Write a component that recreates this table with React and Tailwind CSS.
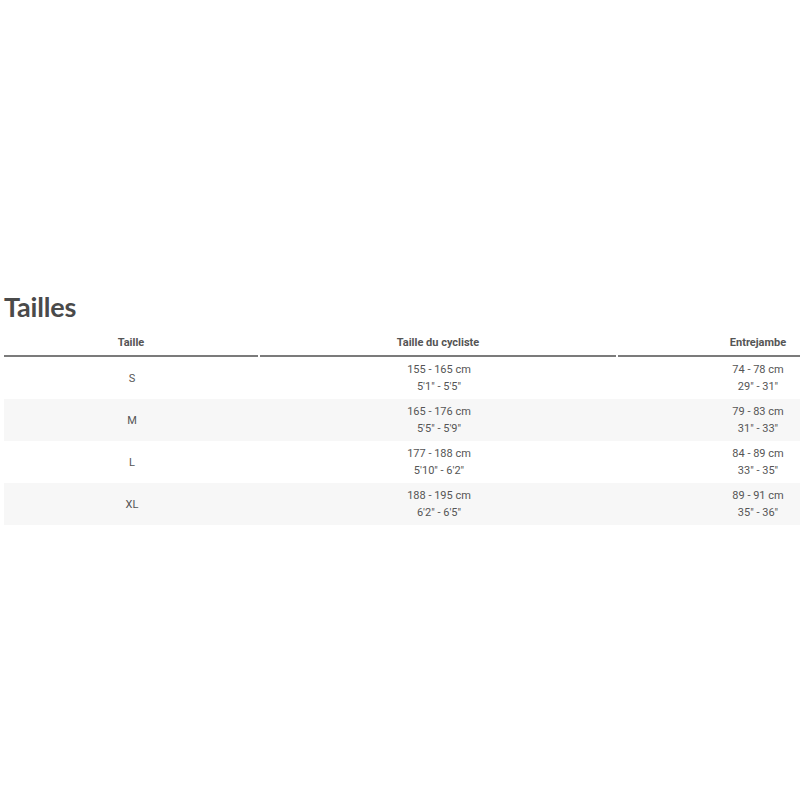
const rows = [
  { size: 'S', rider: ['155 - 165 cm', '5\'1" - 5\'5"'], inseam: ['74 - 78 cm', '29" - 31"'] },
  { size: 'M', rider: ['165 - 176 cm', '5\'5" - 5\'9"'], inseam: ['79 - 83 cm', '31" - 33"'] },
  { size: 'L', rider: ['177 - 188 cm', '5\'10" - 6\'2"'], inseam: ['84 - 89 cm', '33" - 35"'] },
  { size: 'XL', rider: ['188 - 195 cm', '6\'2" - 6\'5"'], inseam: ['89 - 91 cm', '35" - 36"'] },
]

const App = () => {
  return (
    <div className="w-[800px] h-[800px] overflow-hidden bg-white pt-[290px] pl-[4px]" style={{ fontFamily: 'Roboto, Arial, sans-serif' }}>
      <h2
        className="text-[27px] leading-[34px] font-bold text-[#4a4a4a] tracking-[-0.2px]"
        style={{ fontFamily: 'Lato, "Liberation Sans", sans-serif' }}
      >
        Tailles
      </h2>

      <div className="w-[894px] mt-[8px]">
        <div className="grid grid-cols-[256px_358px_280px] text-[11px] font-bold text-[#555]">
          <div className="h-[25px] flex items-center justify-center mr-[2px] border-b-2 border-[#7b7b7b]">Taille</div>
          <div className="h-[25px] flex items-center justify-center mr-[2px] border-b-2 border-[#7b7b7b]">Taille du cycliste</div>
          <div className="h-[25px] flex items-center justify-center border-b-2 border-[#7b7b7b]">Entrejambe</div>
        </div>

        {rows.map((row, i) => (
          <div
            key={row.size}
            className={`grid grid-cols-[256px_358px_280px] h-[42px] text-[11px] leading-[17px] text-[#555] ${i % 2 === 1 ? 'bg-[#f7f7f7]' : 'bg-white'}`}
          >
            <div className="flex items-center justify-center">{row.size}</div>
            <div className="flex flex-col items-center justify-center">
              <span>{row.rider[0]}</span>
              <span>{row.rider[1]}</span>
            </div>
            <div className="flex flex-col items-center justify-center">
              <span>{row.inseam[0]}</span>
              <span>{row.inseam[1]}</span>
            </div>
          </div>
        ))}
      </div>
    </div>
  )
}

export default App
